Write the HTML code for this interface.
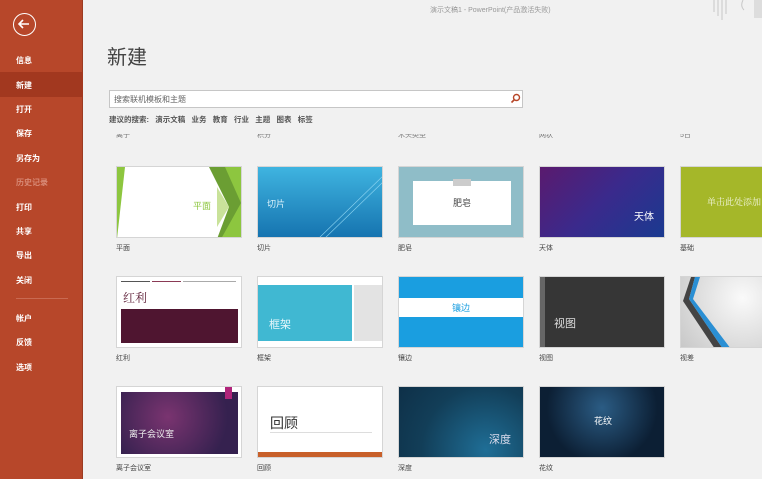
<!DOCTYPE html>
<html><head><meta charset="utf-8"><style>
*{margin:0;padding:0;box-sizing:border-box}
body{width:762px;height:479px;overflow:hidden;background:#f1f1f1;font-family:"Liberation Sans","Noto Sans CJK SC",sans-serif;position:relative}
.side{position:absolute;left:0;top:0;width:83px;height:479px;background:#b7472a;border-right:1px solid #9c3b22}
.side .it{position:absolute;left:16px;font-size:8px;color:#fff;font-weight:bold}
.sel{position:absolute;left:0;top:72px;width:83px;height:25px;background:#a2381f}
.back{position:absolute;left:13px;top:13px;width:23px;height:23px;border:1.5px solid #fff;border-radius:50%}
.t{position:absolute;font-size:8px;color:#444}
.th{position:absolute;width:126px;height:72px;overflow:hidden;border:1px solid #d5d5d5}
.lb{position:absolute;font-size:7px;color:#444}
.cat{position:absolute;top:134px;height:8px;overflow:hidden;font-size:7px;color:#777;line-height:8px}
.cat span{position:relative;top:-2px}
</style></head><body>
<div class="side">
<div class="back"><svg width="20" height="20" viewBox="0 0 20 20" style="position:absolute;left:0;top:0"><path d="M5 10H15M9 6L5 10L9 14" stroke="#fff" stroke-width="1.6" fill="none"/></svg></div>
<div class="sel"></div>
<div class="it" style="top:55px">信息</div>
<div class="it" style="top:80px">新建</div>
<div class="it" style="top:104px">打开</div>
<div class="it" style="top:128px">保存</div>
<div class="it" style="top:153px">另存为</div>
<div class="it" style="top:177px;color:#d88a76">历史记录</div>
<div class="it" style="top:202px">打印</div>
<div class="it" style="top:226px">共享</div>
<div class="it" style="top:250px">导出</div>
<div class="it" style="top:275px">关闭</div>
<div style="position:absolute;left:16px;top:298px;width:52px;height:1px;background:#c96a52"></div>
<div class="it" style="top:313px">帐户</div>
<div class="it" style="top:337px">反馈</div>
<div class="it" style="top:362px">选项</div>
</div>
<div class="t" style="left:430px;top:5px;font-size:7px;color:#999">演示文稿1 - PowerPoint(产品激活失败)</div>
<svg style="position:absolute;left:710px;top:0" width="52" height="22"><g stroke="#c8c8c8" stroke-width="1"><line x1="4" y1="0" x2="4" y2="12"/><line x1="8" y1="0" x2="8" y2="16"/><line x1="12" y1="0" x2="12" y2="20"/><line x1="16" y1="0" x2="16" y2="14"/><path d="M33 0Q30 6 34 10" fill="none"/></g><rect x="44" y="0" width="8" height="18" fill="#ddd"/></svg>
<div class="t" style="left:107px;top:41px;font-size:20px;color:#444">新建</div>
<div style="position:absolute;left:109px;top:90px;width:414px;height:18px;background:#fff;border:1px solid #c6c6c6"></div>
<div class="t" style="left:114px;top:94px;color:#666">搜索联机模板和主题</div>
<svg style="position:absolute;left:510px;top:93px" width="11" height="11"><circle cx="6.5" cy="4.5" r="3" stroke="#b7472a" stroke-width="1.4" fill="none"/><line x1="4.5" y1="6.5" x2="1.5" y2="9.5" stroke="#b7472a" stroke-width="1.6"/></svg>
<div class="t" style="left:109px;top:114px;font-size:7.5px;font-weight:bold;color:#555">建议的搜索:&nbsp;&nbsp;&nbsp;演示文稿&nbsp;&nbsp;&nbsp;业务&nbsp;&nbsp;&nbsp;教育&nbsp;&nbsp;&nbsp;行业&nbsp;&nbsp;&nbsp;主题&nbsp;&nbsp;&nbsp;图表&nbsp;&nbsp;&nbsp;标签</div>
<div class="cat" style="left:116px"><span>离子</span></div>
<div class="cat" style="left:257px"><span>积分</span></div>
<div class="cat" style="left:398px"><span>木头类型</span></div>
<div class="cat" style="left:539px"><span>网状</span></div>
<div class="cat" style="left:680px"><span>5日</span></div>

<!-- row1 -->
<div class="th" style="left:116px;top:166px;background:#fff"><svg width="126" height="72"><polygon points="0,0 8,0 0,72" fill="#8dc63f"/><polygon points="92,0 126,0 126,72 100,72 112,40" fill="#6b9e33"/><polygon points="108,0 126,0 126,72 104,72 124,36" fill="#8dc63f"/><polygon points="100,20 112,40 100,60" fill="#c9e29a"/></svg><div class="lb" style="left:76px;top:32px;color:#8dc63f;font-size:9px">平面</div></div>
<div class="lb" style="left:116px;top:243px">平面</div>
<div class="th" style="left:257px;top:166px;background:linear-gradient(#3fb4e0,#1674b0)"><svg width="126" height="72" style="position:absolute"><line x1="60" y1="72" x2="126" y2="8" stroke="#8fd6f2" stroke-width=".6"/><line x1="66" y1="72" x2="126" y2="14" stroke="#8fd6f2" stroke-width=".6"/></svg><div class="lb" style="left:9px;top:30px;color:#e0f4fc;font-size:9px">切片</div></div>
<div class="lb" style="left:257px;top:243px">切片</div>
<div class="th" style="left:398px;top:166px;background:#8fbdc8"><div style="position:absolute;left:14px;top:14px;width:98px;height:44px;background:#fff"></div><div style="position:absolute;left:54px;top:12px;width:18px;height:7px;background:#ccc"></div><div class="lb" style="left:54px;top:29px;font-size:9px;color:#444">肥皂</div></div>
<div class="lb" style="left:398px;top:243px">肥皂</div>
<div class="th" style="left:539px;top:166px;background:linear-gradient(135deg,#5a1a6e,#3a2a8c 50%,#1a3a90)"><div class="lb" style="left:94px;top:41px;color:#fff;font-size:10px">天体</div></div>
<div class="lb" style="left:539px;top:243px">天体</div>
<div class="th" style="left:680px;top:166px;width:90px;background:#a5b729"><div class="lb" style="left:26px;top:28px;color:#f3f6de;font-size:9px;font-family:'Noto Serif CJK SC',serif;white-space:nowrap">单击此处添加</div></div>
<div class="lb" style="left:680px;top:243px">基础</div>

<!-- row2 -->
<div class="th" style="left:116px;top:276px;background:#fff"><div style="position:absolute;left:4px;top:4px;width:29px;height:1px;background:#555"></div><div style="position:absolute;left:35px;top:4px;width:29px;height:1px;background:#8a3a55"></div><div style="position:absolute;left:66px;top:4px;width:53px;height:1px;background:#aaa"></div><div class="lb" style="left:6px;top:12px;font-size:12px;color:#5a1a33;font-family:'Noto Serif CJK SC',serif">红利</div><div style="position:absolute;left:4px;top:32px;width:117px;height:34px;background:#4f1530"></div></div>
<div class="lb" style="left:116px;top:353px">红利</div>
<div class="th" style="left:257px;top:276px;background:#fff"><div style="position:absolute;left:0;top:8px;width:94px;height:56px;background:#40b8d2"></div><div style="position:absolute;left:96px;top:8px;width:30px;height:56px;background:#e3e3e3"></div><div class="lb" style="left:11px;top:39px;color:#e8f7fb;font-size:11px">框架</div></div>
<div class="lb" style="left:257px;top:353px">框架</div>
<div class="th" style="left:398px;top:276px;background:#1a9ee0"><div style="position:absolute;left:0;top:21px;width:126px;height:19px;background:#fff"></div><div class="lb" style="left:53px;top:24px;color:#1a9ee0;font-size:9px">镶边</div></div>
<div class="lb" style="left:398px;top:353px">镶边</div>
<div class="th" style="left:539px;top:276px;background:#363636"><div style="position:absolute;left:0;top:0;width:5px;height:72px;background:#666"></div><div class="lb" style="left:14px;top:38px;color:#ddd;font-size:11px">视图</div></div>
<div class="lb" style="left:539px;top:353px">视图</div>
<div class="th" style="left:680px;top:276px;width:90px;background:radial-gradient(circle at 70% 30%,#fafafa,#c8c8c8)"><svg width="90" height="72"><polygon points="10,0 14,0 8,22 42,72 34,72 2,24" fill="#444"/><polygon points="14,0 19,0 12,22 50,72 42,72 8,22" fill="#2a8fd4"/></svg></div>
<div class="lb" style="left:680px;top:353px">视差</div>

<!-- row3 -->
<div class="th" style="left:116px;top:386px;background:#fff"><div style="position:absolute;left:4px;top:5px;width:117px;height:62px;background:radial-gradient(circle at 40% 40%,#7a3470,#35214f 75%)"></div><div style="position:absolute;left:108px;top:0;width:7px;height:12px;background:#b0247a"></div><div class="lb" style="left:12px;top:40px;color:#eee;font-size:9px">离子会议室</div></div>
<div class="lb" style="left:116px;top:463px">离子会议室</div>
<div class="th" style="left:257px;top:386px;background:#fff"><div class="lb" style="left:12px;top:26px;color:#333;font-size:14px">回顾</div><div style="position:absolute;left:12px;top:45px;width:102px;height:1px;background:#ddd"></div><div style="position:absolute;left:0;top:65px;width:126px;height:6px;background:#c8602a"></div></div>
<div class="lb" style="left:257px;top:463px">回顾</div>
<div class="th" style="left:398px;top:386px;background:radial-gradient(circle at 70% 90%,#1f6e96,#123e58 60%,#0e3048)"><div class="lb" style="left:90px;top:44px;color:#dde;font-size:11px">深度</div></div>
<div class="lb" style="left:398px;top:463px">深度</div>
<div class="th" style="left:539px;top:386px;background:radial-gradient(circle at 50% 30%,#2b5c84,#0c1f34 70%)"><div class="lb" style="left:54px;top:27px;color:#fff;font-size:9px">花纹</div></div>
<div class="lb" style="left:539px;top:463px">花纹</div>
</body></html>
